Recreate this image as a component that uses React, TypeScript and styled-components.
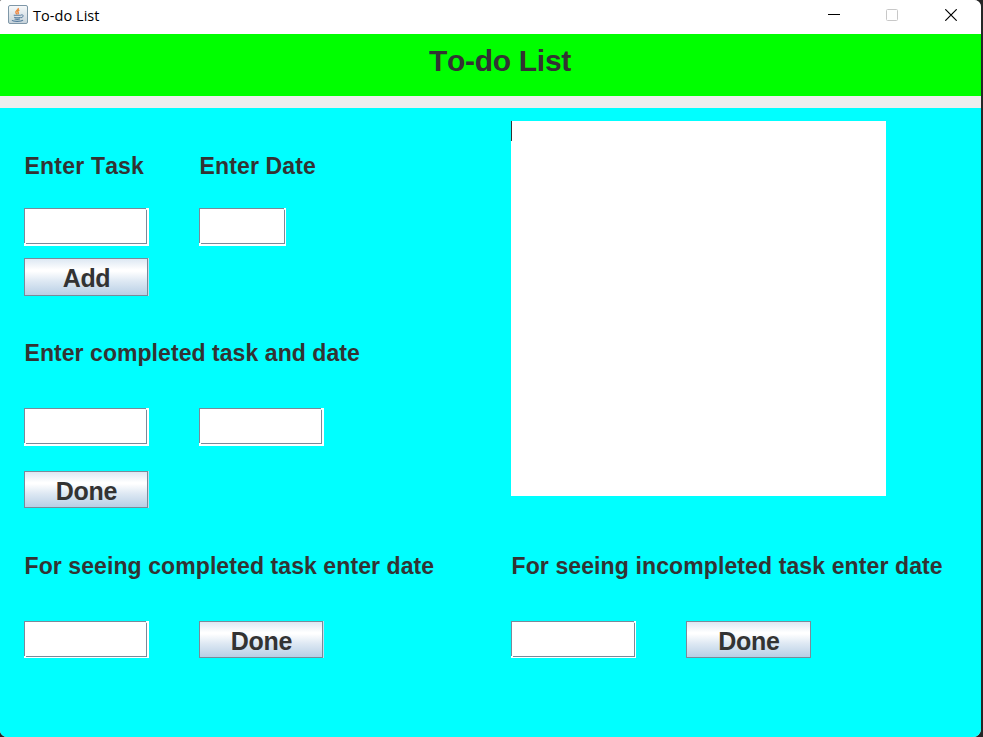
import React from "react";
import styled, { createGlobalStyle } from "styled-components";

const GlobalStyle = createGlobalStyle`
  * { box-sizing: border-box; }
  body { margin: 0; background: #262626; overflow: hidden; }
`;

const Desktop = styled.div`
  width: 983px;
  height: 737px;
  padding: 0 2px 0 0;
  background: #262626;
  font-family: "Liberation Sans", Arial, sans-serif;
  font-kerning: none;
  color: #333;
`;

const Window = styled.div`
  display: flex;
  flex-direction: column;
  height: 737px;
  overflow: hidden;
  background: #eee;
  border-radius: 2px 7px 8px 7px;
`;

const TitleBar = styled.header`
  display: flex;
  align-items: center;
  flex: 0 0 34px;
  padding-left: 8px;
  background: #fff;
`;

const Caption = styled.span`
  flex: 1;
  margin: -2px 0 0 5px;
  font: 14.5px/20px "Open Sans", sans-serif;
  letter-spacing: 0.05px;
  color: #000;
`;

const WindowControls = styled.div`
  display: flex;
  align-items: center;
  height: 30px;
  margin: -4px 1px 0 0;
`;

const Control = styled.button`
  display: flex;
  align-items: center;
  justify-content: center;
  width: 58.5px;
  height: 30px;
  padding: 0;
  border: 0;
  background: none;
`;

const Banner = styled.div`
  flex: 0 0 62px;
  padding: 10px 0 0 19px;
  background: #0f0;
  text-align: center;
`;

const Title = styled.h1`
  margin: 0;
  font-size: 30px;
  line-height: 34px;
  letter-spacing: -0.3px;
`;

const Content = styled.main`
  display: grid;
  grid-template-columns: 487px 1fr;
  grid-template-rows: 445px 1fr;
  flex: 1;
  margin-top: 12px;
  padding-left: 24px;
  background: #0ff;
`;

const Forms = styled.div`
  padding-top: 45px;
`;

const Group = styled.section<{ $gap?: number }>`
  margin-bottom: ${(p) => p.$gap ?? 0}px;
`;

const Row = styled.div<{ $top?: number }>`
  display: flex;
  margin-top: ${(p) => p.$top ?? 0}px;
`;

const Cell = styled.div`
  width: 175px;
`;

const Label = styled.label<{ $spacing?: number }>`
  display: block;
  padding-left: 0.5px;
  font-size: 23px;
  font-weight: bold;
  line-height: 26px;
  letter-spacing: ${(p) => p.$spacing ?? 0.09}px;
  white-space: nowrap;
`;

/* $right and $bottom are the widths of the white highlight outside the bevel line. */
const Field = styled.input<{ $w?: number; $h?: number; $right?: number; $bottom?: number }>`
  display: block;
  width: ${(p) => p.$w ?? 125}px;
  height: ${(p) => p.$h ?? 38}px;
  margin: 0;
  padding: 4px 6px;
  border: 0;
  outline: 0;
  font: 23px/28px "Liberation Sans", Arial, sans-serif;
  background-color: #fff;
  background-image: linear-gradient(#7a8a99, #7a8a99), linear-gradient(#7a8a99, #7a8a99),
    linear-gradient(#7a8a99, #7a8a99), linear-gradient(#7a8a99, #7a8a99),
    linear-gradient(#eee, #eee);
  background-repeat: no-repeat;
  background-position:
    left 0 top 0,
    left 0 top 0,
    right ${(p) => p.$right ?? 2}px top 2px,
    left 2px bottom ${(p) => p.$bottom ?? 2}px,
    right ${(p) => p.$right ?? 2}px top 1px;
  background-size:
    calc(100% - ${(p) => (p.$right ?? 2) + 1}px) 1px,
    1px calc(100% - ${(p) => (p.$bottom ?? 2) + 1}px),
    1px calc(100% - ${(p) => (p.$bottom ?? 2) + 2}px),
    calc(100% - ${(p) => (p.$right ?? 2) + 2}px) 1px,
    2px 1px;
`;

const Button = styled.button<{ $h?: number; $full?: boolean }>`
  display: block;
  width: ${(p) => (p.$full ? 125 : 124)}px;
  height: ${(p) => p.$h ?? 37}px;
  margin: 0;
  padding: 0;
  border: 1px solid #7a8a99;
  border-radius: 0;
  background: linear-gradient(#dde8f3 0%, #fff 30%, #fff 34%, #dde8f3 62%, #b8cfe5 100%);
  box-shadow: ${(p) => (p.$full ? "none" : "1px 0 0 #c4dbe9")};
  font: bold 25px/28px "Liberation Sans", Arial, sans-serif;
  font-kerning: none;
  letter-spacing: -0.3px;
  color: #333;
`;

const ButtonText = styled.span<{ $lift?: number }>`
  display: block;
  height: 26px;
  margin-top: 1px;
  margin-bottom: ${(p) => p.$lift ?? 0}px;
  padding-left: 1px;
  line-height: 28px;
`;

const TaskList = styled.div`
  width: 375px;
  height: 375px;
  margin-top: 13px;
  background: #fff;
`;

const Caret = styled.div`
  width: 1px;
  height: 20px;
  background: #333;
`;

const IconSlot = styled.span`
  display: flex;
  margin-top: -4px;
`;

const JavaIcon = () => (
  <svg width="20" height="20" viewBox="0 0 20 20" fill="none">
    <defs>
      <linearGradient id="tile" x1="0" y1="0" x2="0" y2="1">
        <stop offset="0" stopColor="#f7fafb" />
        <stop offset="1" stopColor="#c6d2da" />
      </linearGradient>
    </defs>
    <rect x=".5" y=".5" width="19" height="18" rx="1.5" fill="url(#tile)" stroke="#7f97a8" />
    <path d="M10.300 3c.5 2-3.400 2.600-2.400 4.700.4.800 1 1 1 1.800M11.300 5c-2 1-1.800 1.800-1.100 2.500.5.700.1 1.300-.4 1.700" stroke="#ee8a43" strokeWidth="1.400" />
    <path d="M5.700 10.300h7.100M6.200 12.300c1.800.6 4.800.6 6.500 0M6.500 14c1.600.5 4 .5 5.500 0M4 15.300c1 1.500 9.400 1.400 11-.1" stroke="#587e9f" strokeWidth="1.100" />
    <path d="M13 10c3-.7 3 2-.2 2.900" stroke="#587e9f" />
  </svg>
);

export default function App() {
  return (
    <Desktop>
      <GlobalStyle />
      <Window>
        <TitleBar>
          <IconSlot><JavaIcon /></IconSlot>
          <Caption>To-do List</Caption>
          <WindowControls>
            <Control aria-label="Minimize">
              <svg width="12" height="12"><path d="M0 5.500h12" stroke="#000" /></svg>
            </Control>
            <Control aria-label="Maximize" disabled>
              <svg width="12" height="12">
                <rect x=".5" y=".5" width="11" height="11" rx="1" fill="none" stroke="#c8c8c8" />
              </svg>
            </Control>
            <Control aria-label="Close">
              <svg width="12" height="12">
                <path d="M.3.3l11.400 11.400M11.700.3L.3 11.700" stroke="#000" strokeWidth="1.200" />
              </svg>
            </Control>
          </WindowControls>
        </TitleBar>
        <Banner>
          <Title>To-do List</Title>
        </Banner>
        <Content>
          <Forms>
            <Group $gap={44}>
              <Row>
                <Cell><Label $spacing={0.2}>Enter Task</Label></Cell>
                <Cell><Label $spacing={0.15}>Enter Date</Label></Cell>
              </Row>
              <Row $top={29}>
                <Cell><Field /></Cell>
                <Cell><Field $w={87} $right={1} /></Cell>
              </Row>
              <Row $top={12}>
                <Button $h={38}><ButtonText $lift={2}>Add</ButtonText></Button>
              </Row>
            </Group>
            <Group>
              <Label $spacing={0.06}>Enter completed task and date</Label>
              <Row $top={42}>
                <Cell><Field /></Cell>
                <Cell><Field /></Cell>
              </Row>
              <Row $top={25}>
                <Button><ButtonText>Done</ButtonText></Button>
              </Row>
            </Group>
          </Forms>
          <TaskList><Caret /></TaskList>
          <Group>
            <Label>For seeing completed task enter date</Label>
            <Row $top={42}>
              <Cell><Field $h={37} $bottom={1} /></Cell>
              <Button><ButtonText>Done</ButtonText></Button>
            </Row>
          </Group>
          <Group>
            <Label $spacing={0.115}>For seeing incompleted task enter date</Label>
            <Row $top={42}>
              <Cell><Field $h={37} $right={1} $bottom={1} /></Cell>
              <Button $full><ButtonText>Done</ButtonText></Button>
            </Row>
          </Group>
        </Content>
      </Window>
    </Desktop>
  );
}
